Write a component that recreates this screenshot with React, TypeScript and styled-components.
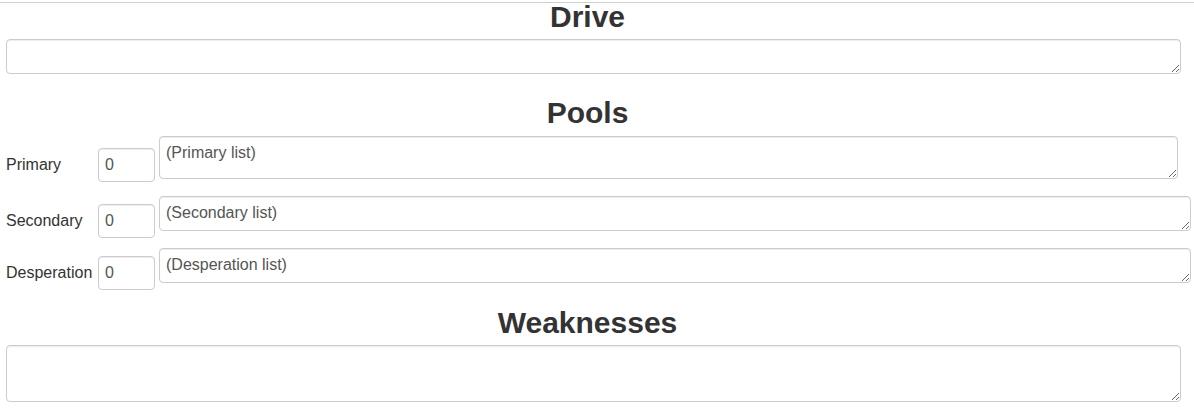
import React from 'react'
import styled, { createGlobalStyle } from 'styled-components'

const GlobalStyle = createGlobalStyle`
  body {
    margin: 0;
    background: #fff;
    color: #333;
    font-family: "Liberation Sans", Arial, sans-serif;
    font-size: 16px;
  }
`

type Pool = {
  name: string
  list: string
  offset: number
  gap: number
  height: number
  width: number
}

// gap of the first row collapses with the heading's bottom margin
const pools: Pool[] = [
  { name: 'Primary', list: '(Primary list)', offset: 12, gap: 10, height: 43, width: 1019 },
  { name: 'Secondary', list: '(Secondary list)', offset: 8, gap: 14, height: 35, width: 1032 },
  { name: 'Desperation', list: '(Desperation list)', offset: 8, gap: 10, height: 35, width: 1032 },
]

const App: React.FC = () => {
  return (
    <>
      <GlobalStyle />
      <Sheet>
        <SectionTitle $top={0}>Drive</SectionTitle>
        <NoteArea $height={35} $width={1175} />

        <SectionTitle $top={25}>Pools</SectionTitle>
        {pools.map((p) => (
          <PoolRow key={p.name} $gap={p.gap}>
            <PoolLabel $offset={p.offset}>{p.name}</PoolLabel>
            <PoolValue type="text" defaultValue="0" $offset={p.offset} />
            <NoteArea $height={p.height} $width={p.width} defaultValue={p.list} />
          </PoolRow>
        ))}

        <SectionTitle $top={19}>Weaknesses</SectionTitle>
        <NoteArea $height={57} $width={1175} />
      </Sheet>
    </>
  )
}

const Sheet = styled.div`
  margin-top: 2px;
  border-top: 1px solid #d0d0d0;
  padding: 0 6px;
`

const SectionTitle = styled.h2<{ $top: number }>`
  margin: ${(p) => p.$top}px 0 9px;
  padding-right: 19px;
  text-align: center;
  font-size: 30px;
  line-height: 27px;
  font-weight: 700;
  color: #333;
`

const fieldBase = `
  box-sizing: border-box;
  border: 1px solid #ccc;
  border-radius: 4px;
  padding: 6px;
  font-family: "Liberation Sans", Arial, sans-serif;
  font-size: 16px;
  line-height: 20px;
  color: #555;
  background: #fff;
  box-shadow: inset 0 1px 1px rgba(0, 0, 0, 0.075);
  outline: none;
`

const NoteArea = styled.textarea<{ $height: number; $width: number }>`
  ${fieldBase}
  display: block;
  margin: 0;
  width: ${(p) => p.$width}px;
  height: ${(p) => p.$height}px;
`

const PoolRow = styled.div<{ $gap: number }>`
  display: grid;
  grid-template-columns: 88px 57px auto;
  column-gap: 4px;
  align-items: start;
  margin-top: ${(p) => p.$gap}px;
`

const PoolLabel = styled.label<{ $offset: number }>`
  margin-top: ${(p) => p.$offset + 7}px;
  line-height: 20px;
  white-space: nowrap;
`

const PoolValue = styled.input<{ $offset: number }>`
  ${fieldBase}
  margin: ${(p) => p.$offset}px 0 0;
  width: 57px;
  height: 34px;
`

export default App
